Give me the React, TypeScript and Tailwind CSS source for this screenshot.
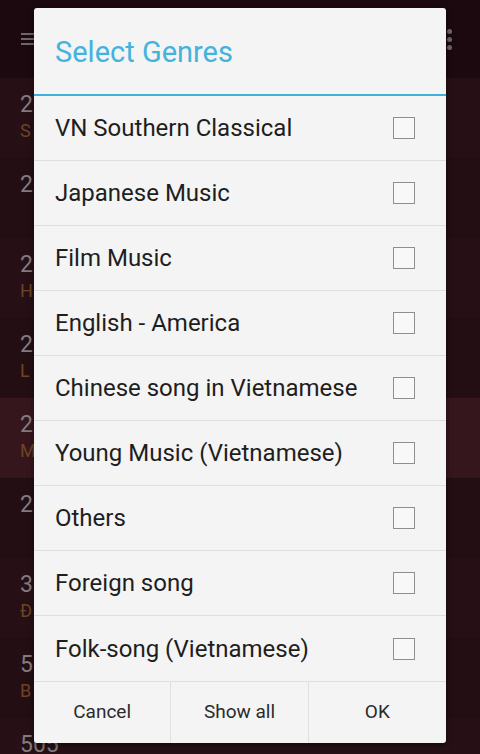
import React from 'react';

const bgRows = [
  { n: '2', s: 'S', hi: false },
  { n: '2', s: '', hi: false },
  { n: '2', s: 'H', hi: false },
  { n: '2', s: 'L', hi: false },
  { n: '2', s: 'M', hi: true },
  { n: '2', s: '', hi: false },
  { n: '3', s: 'Đ', hi: false },
  { n: '5', s: 'B', hi: false },
  { n: '505', s: '', hi: false },
];

const genres = [
  'VN Southern Classical',
  'Japanese Music',
  'Film Music',
  'English - America',
  'Chinese song in Vietnamese',
  'Young Music (Vietnamese)',
  'Others',
  'Foreign song',
  'Folk-song (Vietnamese)',
];

const App: React.FC = () => {
  return (
    <div className="relative w-[480px] h-[754px] overflow-hidden bg-[#200b12] font-['Roboto',sans-serif]">
      {/* Background screen (dimmed) */}
      <div className="flex flex-col">
        <div className="h-[78px] bg-[#1c0910] flex items-center justify-between pl-[21px] pr-[28px]">
          <div className="flex flex-col gap-[3px] w-[14px]">
            <div className="h-[2px] bg-[#6f6669]" />
            <div className="h-[2px] bg-[#6f6669]" />
            <div className="h-[2px] bg-[#6f6669]" />
          </div>
          <div className="flex flex-col gap-[3px] items-center">
            <div className="w-[5px] h-[5px] rounded-full bg-[#6f6669]" />
            <div className="w-[5px] h-[5px] rounded-full bg-[#6f6669]" />
            <div className="w-[5px] h-[5px] rounded-full bg-[#6f6669]" />
          </div>
        </div>
        {bgRows.map((r, i) => (
          <div
            key={i}
            className={`h-[80px] flex flex-col pt-[13px] pl-[20px] ${r.hi ? 'bg-[#36161d]' : i % 2 === 0 ? 'bg-[#261016]' : 'bg-[#230e14]'}`}
          >
            <div className="text-[23px] leading-[27px] text-[#857b7e]">{r.n}</div>
            {r.s && <div className="text-[18px] leading-[26px] text-[#6e4426]">{r.s}</div>}
          </div>
        ))}
      </div>

      {/* Dialog */}
      <div className="absolute left-[34px] top-[8px] w-[412px] h-[735px] bg-[#f4f4f4] rounded-[3px] shadow-[0_2px_6px_rgba(0,0,0,0.5)] flex flex-col overflow-hidden">
        <div className="h-[88px] shrink-0 flex items-center pl-[21px] pt-[4px] border-b-2 border-[#3fb0dc]">
          <span className="text-[29px] text-[#43b3dc]">Select Genres</span>
        </div>
        <div className="flex flex-col">
          {genres.map((g, i) => (
            <div
              key={g}
              className={`h-[65px] shrink-0 flex items-center justify-between pl-[21px] pr-[31px] ${i < genres.length - 1 ? 'border-b border-[#dedede]' : ''}`}
            >
              <span className="text-[24px] text-[#1e1e1e]">{g}</span>
              <div className="w-[22px] h-[22px] border-[1.5px] border-[#8f8f8f] bg-[#f8f8f8]" />
            </div>
          ))}
        </div>
        <div className="flex-1 grid grid-cols-3 border-t border-[#dedede]">
          <div className="flex items-center justify-center text-[19px] text-[#2b2b2b] border-r border-[#e0e0e0]">Cancel</div>
          <div className="flex items-center justify-center text-[19px] text-[#2b2b2b] border-r border-[#e0e0e0]">Show all</div>
          <div className="flex items-center justify-center text-[19px] text-[#2b2b2b]">OK</div>
        </div>
      </div>
    </div>
  );
};

export default App;
